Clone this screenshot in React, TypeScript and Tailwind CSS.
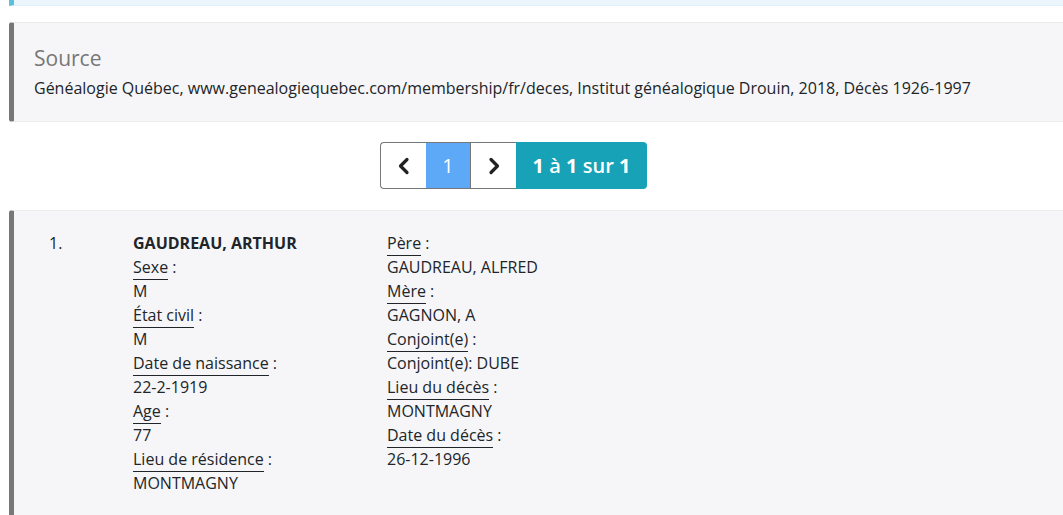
import React from "react";

interface Field {
  label: string;
  value: string;
}

const LEFT_FIELDS: Field[] = [
  { label: "Sexe", value: "M" },
  { label: "État civil", value: "M" },
  { label: "Date de naissance", value: "22-2-1919" },
  { label: "Age", value: "77" },
  { label: "Lieu de résidence", value: "MONTMAGNY" },
];

const RIGHT_FIELDS: Field[] = [
  { label: "Père", value: "GAUDREAU, ALFRED" },
  { label: "Mère", value: "GAGNON, A" },
  { label: "Conjoint(e)", value: "Conjoint(e): DUBE" },
  { label: "Lieu du décès", value: "MONTMAGNY" },
  { label: "Date du décès", value: "26-12-1996" },
];

function FieldList({ fields }: { fields: Field[] }) {
  return (
    <>
      {fields.map((f) => (
        <React.Fragment key={f.label}>
          <div>
            <span className="border-b border-[#212529] pb-[1px]">{f.label}</span> :
          </div>
          <div>{f.value}</div>
        </React.Fragment>
      ))}
    </>
  );
}

export default function App() {
  return (
    <div
      className="min-h-[515px] bg-white text-[#212529] text-[16px] leading-6"
      style={{ fontFamily: "'Open Sans', 'Liberation Sans', sans-serif" }}
    >
      {/* callout above, mostly scrolled out */}
      <div className="ml-[9px] h-[6px] border-l-[5px] border-[#5bc0de] bg-[#eaf5fc] border-b border-b-[#dfeef8]" />

      {/* source block */}
      <div className="ml-[9px] mt-[16px] h-[100px] border-l-[5px] border-l-[#777] border-t border-t-[#eaeaea] border-b border-b-[#ececec] rounded-l-[3px] bg-[#f6f6f8] pl-[20px] pt-[21px]">
        <div className="text-[21px] leading-7 text-[#777]">Source</div>
        <div className="mt-[4px] text-[16px]">
          Généalogie Québec, www.genealogiequebec.com/membership/fr/deces, Institut généalogique Drouin, 2018, Décès 1926-1997
        </div>
      </div>

      {/* pagination */}
      <div className="mt-[20px] flex justify-center">
        <div className="ml-[-36px] flex h-[47px] text-[20px]">
          <button className="flex w-[46px] items-center justify-center rounded-l-[4px] border border-[#777] border-r-0 bg-white text-[#222]">
            <svg width="14" height="20" viewBox="0 0 14 20" fill="none">
              <path d="M10 3.5 L3.5 10 L10 16.5" stroke="#222" strokeWidth="3.2" strokeLinecap="round" strokeLinejoin="round" />
            </svg>
          </button>
          <button className="flex w-[44px] items-center justify-center border-y border-[#777] bg-[#5ea9f7] text-white">
            1
          </button>
          <button className="flex w-[46px] items-center justify-center border border-[#777] border-r-0 bg-white">
            <svg width="14" height="20" viewBox="0 0 14 20" fill="none">
              <path d="M4 3.5 L10.5 10 L4 16.5" stroke="#222" strokeWidth="3.2" strokeLinecap="round" strokeLinejoin="round" />
            </svg>
          </button>
          <div className="flex w-[131px] items-center justify-center rounded-r-[4px] bg-[#17a2b8] text-white">
            <b>1</b>&nbsp;<span className="font-semibold">à</span>&nbsp;<b>1</b>&nbsp;<span className="font-semibold">sur</span>&nbsp;<b>1</b>
          </div>
        </div>
      </div>

      {/* result */}
      <div className="ml-[9px] mt-[21px] h-[305px] border-l-[5px] border-l-[#777] border-t border-t-[#ececec] rounded-tl-[3px] bg-[#f6f6f8] pt-[20px]">
        <div className="flex">
          <div className="w-[119px] pl-[35px]">1.</div>
          <div className="w-[254px]">
            <div className="font-bold">GAUDREAU, ARTHUR</div>
            <FieldList fields={LEFT_FIELDS} />
          </div>
          <div>
            <FieldList fields={RIGHT_FIELDS} />
          </div>
        </div>
      </div>
    </div>
  );
}
